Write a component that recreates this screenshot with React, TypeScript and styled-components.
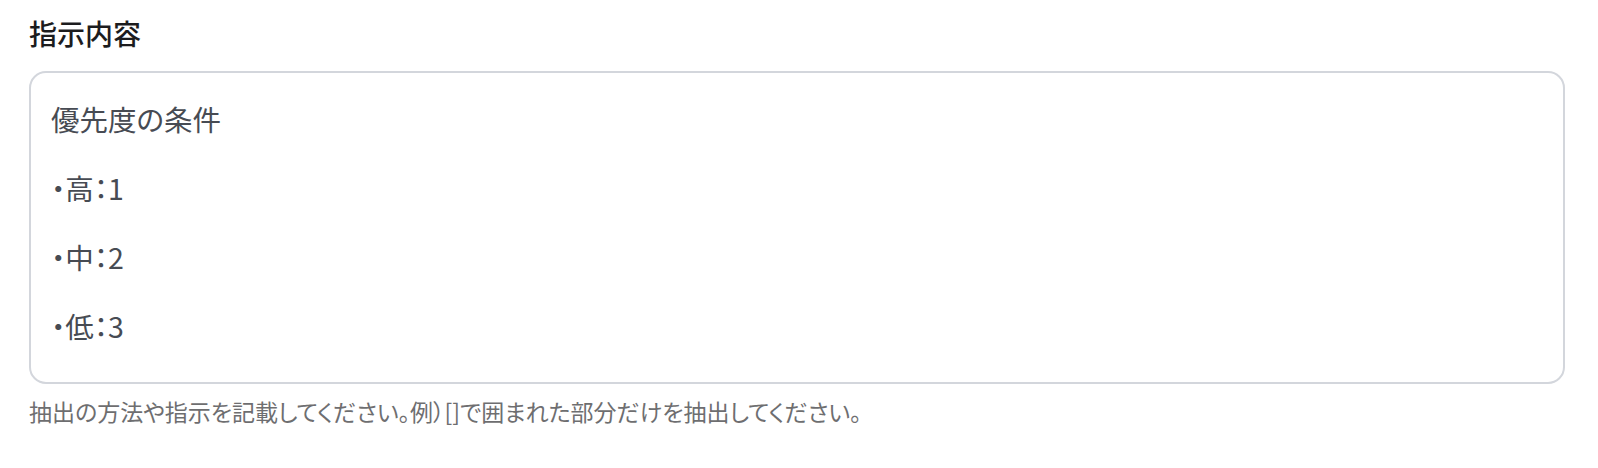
import React from "react"
import styled, { createGlobalStyle } from "styled-components"

const GlobalStyle = createGlobalStyle`
    html, body {
        margin: 0;
        padding: 0;
        background: #ffffff;
    }
    body {
        font-family: "Noto Sans CJK JP", "Noto Sans", sans-serif;
        -webkit-font-smoothing: antialiased;
    }
`

const Field = styled.section`
    display: flex;
    flex-direction: column;
    padding: 14px 33px 0 29px;
`

const Label = styled.h2`
    margin: 0 0 18px;
    font-size: 28px;
    line-height: 39px;
    font-weight: 500;
    color: #1c1c1e;
    font-feature-settings: "palt";
`

const TextBox = styled.div`
    box-sizing: border-box;
    height: 313px;
    border: 2px solid #d3d6dc;
    border-radius: 17px;
    padding: 29px 20px;
    font-size: 28.5px;
    line-height: 34.5px;
    color: #474b53;
    white-space: pre-wrap;
    font-feature-settings: "palt";
`

const Hint = styled.p`
    margin: 12px 0 0;
    font-size: 23px;
    line-height: 30px;
    color: #6e6e70;
    font-feature-settings: "palt";
`

const instruction = ["優先度の条件", "", "・高：1", "", "・中：2", "", "・低：3"].join("\n")

export default function App() {
    return (
        <>
            <GlobalStyle />
            <Field>
                <Label>指示内容</Label>
                <TextBox>{instruction}</TextBox>
                <Hint>抽出の方法や指示を記載してください。例）[]で囲まれた部分だけを抽出してください。</Hint>
            </Field>
        </>
    )
}
